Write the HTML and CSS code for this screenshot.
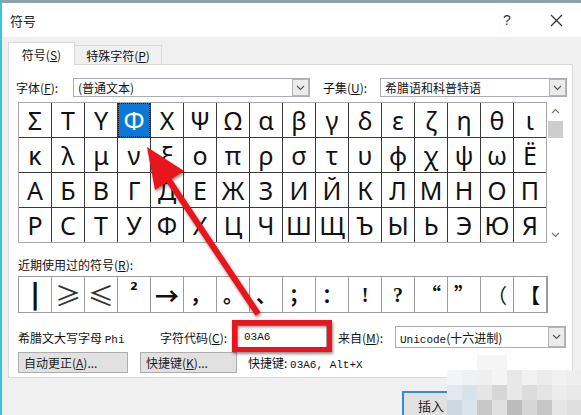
FILE: index.html
```html
<!DOCTYPE html>
<html>
<head>
<meta charset="utf-8">
<title>符号</title>
<link rel="stylesheet" href="styles.css">
</head>
<body>
<div class="window">
  <div class="titlebar">
    <span class="title">符号</span>
    <span class="help">?</span>
    <span class="close"><svg width="13" height="13" viewBox="0 0 13 13"><path d="M1 1L12 12M12 1L1 12" stroke="#333" stroke-width="1.2" fill="none"/></svg></span>
  </div>
  <div class="content">
    <div class="tabs">
      <div class="tab active">符号(<u>S</u>)</div>
      <div class="tab">特殊字符(<u>P</u>)</div>
    </div>
    <div class="panel">
      <div class="row fontrow">
        <span class="lbl w57">字体(<u>F</u>):</span>
        <div class="combo font-combo"><span>(普通文本)</span><span class="arrow"><svg width="9" height="6" viewBox="0 0 9 6"><path d="M1 1L4.5 4.5L8 1" stroke="#555" stroke-width="1.1" fill="none"/></svg></span></div>
        <span class="lbl w57 subset-lbl">子集(<u>U</u>):</span>
        <div class="combo subset-combo"><span>希腊语和科普特语</span><span class="arrow"><svg width="9" height="6" viewBox="0 0 9 6"><path d="M1 1L4.5 4.5L8 1" stroke="#555" stroke-width="1.1" fill="none"/></svg></span></div>
      </div>
      <div class="gridwrap">
        <div class="grid">
          <div class="c">Σ</div><div class="c">Τ</div><div class="c">Υ</div><div class="c sel">Φ</div><div class="c">Χ</div><div class="c">Ψ</div><div class="c">Ω</div><div class="c">α</div><div class="c">β</div><div class="c">γ</div><div class="c">δ</div><div class="c">ε</div><div class="c">ζ</div><div class="c">η</div><div class="c">θ</div><div class="c">ι</div>
          <div class="c">κ</div><div class="c">λ</div><div class="c">μ</div><div class="c">ν</div><div class="c">ξ</div><div class="c">ο</div><div class="c">π</div><div class="c">ρ</div><div class="c">σ</div><div class="c">τ</div><div class="c">υ</div><div class="c">φ</div><div class="c">χ</div><div class="c">ψ</div><div class="c">ω</div><div class="c">Ё</div>
          <div class="c">А</div><div class="c">Б</div><div class="c">В</div><div class="c">Г</div><div class="c">Д</div><div class="c">Е</div><div class="c">Ж</div><div class="c">З</div><div class="c">И</div><div class="c">Й</div><div class="c">К</div><div class="c">Л</div><div class="c">М</div><div class="c">Н</div><div class="c">О</div><div class="c">П</div>
          <div class="c">Р</div><div class="c">С</div><div class="c">Т</div><div class="c">У</div><div class="c">Ф</div><div class="c">Х</div><div class="c">Ц</div><div class="c">Ч</div><div class="c">Ш</div><div class="c">Щ</div><div class="c">Ъ</div><div class="c">Ы</div><div class="c">Ь</div><div class="c">Э</div><div class="c">Ю</div><div class="c">Я</div>
        </div>
        <div class="scrollbar">
          <span class="sb-arrow"><svg width="9" height="6" viewBox="0 0 9 6"><path d="M1 5L4.5 1.5L8 5" stroke="#777" stroke-width="1.2" fill="none"/></svg></span>
          <span class="thumb"></span>
          <span class="sb-space"></span>
          <span class="sb-arrow"><svg width="9" height="6" viewBox="0 0 9 6"><path d="M1 1L4.5 4.5L8 1" stroke="#777" stroke-width="1.2" fill="none"/></svg></span>
        </div>
      </div>
      <div class="recent-label">近期使用过的符号(<u>R</u>):</div>
      <div class="recent">
        <div class="r bar">|</div><div class="r thin">≥</div><div class="r thin">≤</div><div class="r sup">²</div><div class="r arr">→</div><div class="r">，</div><div class="r">。</div><div class="r">、</div><div class="r">；</div><div class="r">：</div><div class="r serif">!</div><div class="r serif">?</div><div class="r">“</div><div class="r">”</div><div class="r paren">（</div><div class="r">【</div>
      </div>
      <div class="row coderow">
        <span class="charname">希腊文大写字母 <span class="mono">Phi</span></span>
        <span class="lbl code-lbl">字符代码(<u>C</u>):</span>
        <div class="input"><span class="mono">03A6</span></div>
        <span class="lbl from-lbl">来自(<u>M</u>):</span>
        <div class="combo from-combo"><span><span class="mono">Unicode</span>(十六进制)</span><span class="arrow"><svg width="9" height="6" viewBox="0 0 9 6"><path d="M1 1L4.5 4.5L8 1" stroke="#555" stroke-width="1.1" fill="none"/></svg></span></div>
      </div>
      <div class="row btnrow">
        <button class="btn btn-auto">自动更正(<u>A</u>)...</button>
        <button class="btn btn-key">快捷键(<u>K</u>)...</button>
        <span class="shortcut">快捷键: <span class="mono">03A6, Alt+X</span></span>
      </div>
    </div>
    <div class="footer">
      <button class="insert">插入</button>
    </div>
  </div>
</div>

<svg class="annot" width="581" height="415" viewBox="0 0 581 415">
  <g class="shadow">
    <line x1="258" y1="314" x2="166" y2="176" stroke="#e8161c" stroke-width="6"/>
    <polygon points="147,147 184,171 155,190" fill="#e8161c"/>
    <rect x="234.5" y="322.5" width="95" height="27" fill="none" stroke="#e8161c" stroke-width="5"/>
  </g>
</svg>

<div class="mosaic">
  <i></i><i></i><i></i><i></i><i></i><i></i><i></i><i></i><i></i>
  <i></i><i></i><i></i><i></i><i></i><i></i><i></i><i></i><i></i>
  <i></i><i></i><i></i><i></i><i></i><i></i><i></i><i></i><i></i>
  <i></i><i></i><i></i><i></i><i></i><i></i><i></i><i></i><i></i>
</div>
</body>
</html>
```

FILE: styles.css
```css
* { box-sizing: border-box; margin: 0; padding: 0; }
html, body { width: 581px; height: 415px; overflow: hidden; }
body {
  position: relative;
  background: #f0f0f0;
  font-family: "Noto Sans CJK SC", sans-serif;
  font-size: 12px;
  color: #111;
}
u { text-decoration: underline; text-underline-offset: 1px; }
.mono { font-family: "Liberation Mono", "Noto Sans CJK SC", monospace; font-size: 11px; }

.window {
  width: 581px;
  height: 415px;
  border-top: 3px solid #8ea3a7;
  border-left: 2px solid #3ec3d2;
  background: #f0f0f0;
}

.titlebar {
  height: 34px;
  background: #fff;
  display: flex;
  align-items: center;
}
.title { padding-left: 8px; font-size: 13px; color: #222; }
.help { margin-left: auto; width: 20px; text-align: center; font-size: 14px; color: #333; margin-right: 19px; font-family: "Liberation Sans", sans-serif; }
.close { width: 40px; display: flex; justify-content: center; margin-right: 5px; }

.content { padding: 5px 8px 0 6px; }

.tabs { display: flex; align-items: flex-end; height: 22px; }
.tab {
  height: 19px;
  width: 88px;
  border: 1px solid #d9d9d9;
  border-bottom: none;
  background: #f0f0f0;
  display: flex;
  align-items: center;
  justify-content: center;
  font-size: 12px;
  margin-left: -1px;
}
.tab.active {
  width: 67px;
  height: 23px;
  margin-left: 0;
  margin-bottom: -1px;
  background: #fff;
  position: relative;
  z-index: 1;
}

.panel {
  height: 314px;
  border: 1px solid #d9d9d9;
  background: #fff;
  padding: 13px 0 0 7px;
}

.row { display: flex; align-items: center; }
.lbl { white-space: nowrap; }
.w57 { width: 57px; }
.subset-lbl { margin-left: 13px; }

.combo {
  height: 19px;
  border: 1px solid #abadb3;
  background: #fff;
  display: flex;
  align-items: center;
  justify-content: space-between;
  padding-left: 4px;
  white-space: nowrap;
}
.font-combo { width: 237px; }
.subset-combo { width: 187px; }
.arrow {
  width: 17px;
  height: 17px;
  border: 1px solid #b5b5b5;
  background: #ececec;
  display: flex;
  align-items: center;
  justify-content: center;
}

.gridwrap { display: flex; margin: 5px 0 0 2px; }
.grid {
  width: 529px;
  height: 141px;
  display: grid;
  grid-template-columns: repeat(16, 32px);
  grid-template-rows: repeat(4, 34px);
  gap: 1px;
  background: #3a3a3a;
  border: 1px solid #a8a8a8;
}
.c {
  background: #fff;
  display: flex;
  align-items: center;
  justify-content: center;
  font-family: "Noto Sans", sans-serif;
  font-size: 25px;
  line-height: 1;
  color: #111;
}
.c.sel {
  background: #0a78d6;
  color: #fff;
  outline: 1px dotted #222;
  outline-offset: -1px;
}

.scrollbar {
  width: 17px;
  height: 141px;
  background: #fff;
  display: flex;
  flex-direction: column;
  align-items: center;
}
.sb-arrow { height: 17px; display: flex; align-items: center; justify-content: center; }
.thumb { width: 15px; height: 17px; background: #cdcdcd; margin-top: 2px; }
.sb-space { flex: 1; }

.recent-label { margin: 14px 0 0 2px; height: 16px; line-height: 16px; }
.recent {
  margin: 3px 0 0 2px;
  width: 530px;
  display: grid;
  grid-template-columns: repeat(16, 32px);
  grid-auto-rows: 35px;
  gap: 1px;
  background: #9c9c9c;
  border: 1px solid #9c9c9c;
}
.r {
  background: #fff;
  display: flex;
  align-items: center;
  justify-content: center;
  font-size: 20px;
  font-weight: bold;
  line-height: 1;
  color: #111;
}
.r.bar { font-family: "DejaVu Sans", sans-serif; font-size: 28px; }
.r.thin { font-weight: normal; font-size: 26px; color: #333; }
.r.paren { font-weight: normal; }
.r.arr { font-size: 24px; }
.r.sup { font-size: 18px; align-items: flex-start; padding-top: 4px; font-family: "DejaVu Sans", sans-serif; }
.r.serif { font-family: "Liberation Serif", serif; font-size: 20px; }

.coderow { margin-top: 12px; height: 24px; padding-left: 2px; }
.charname { width: 142px; white-space: nowrap; }
.code-lbl { width: 77px; }
.input {
  width: 90px;
  height: 24px;
  border: 1px solid #abadb3;
  display: flex;
  align-items: center;
  padding-left: 6px;
}
.from-lbl { margin-left: 11px; width: 57px; }
.from-combo { width: 171px; height: 22px; }
.from-combo .arrow { height: 20px; }

.btnrow { margin-top: 3px; padding-left: 2px; }
.btn {
  height: 21px;
  background: #e1e1e1;
  border: 1px solid #adadad;
  font-family: "Noto Sans CJK SC", sans-serif;
  font-size: 12px;
  color: #222;
  text-align: left;
  padding-left: 5px;
}
.btn-auto { width: 110px; }
.btn-key { width: 97px; margin-left: 12px; }
.shortcut { margin-left: 11px; white-space: nowrap; }

.footer { margin: 13px 0 0 394px; }
.insert {
  width: 58px;
  height: 28px;
  background: #e1e1e1;
  border: 2px solid #3a88d6;
  font-family: "Noto Sans CJK SC", sans-serif;
  font-size: 13px;
  color: #222;
}

.annot { position: absolute; left: 0; top: 0; pointer-events: none; }
.shadow { filter: drop-shadow(1px 2px 1.5px rgba(0,0,0,0.45)); }

.mosaic {
  position: absolute;
  left: 447px;
  top: 355px;
  display: grid;
  grid-template-columns: repeat(9, 15px);
  grid-auto-rows: 15px;
}
.mosaic i { display: block; }
.mosaic i:nth-child(3) { background: rgba(235,235,235,0.5); }
.mosaic i:nth-child(4) { background: rgba(235,235,235,0.5); }
.mosaic i:nth-child(10) { background: #f2f5f7; }
.mosaic i:nth-child(11) { background: #edf1f4; }
.mosaic i:nth-child(12) { background: #efefef; }
.mosaic i:nth-child(13) { background: #f4f4f4; }
.mosaic i:nth-child(14) { background: #e8e8e8; }
.mosaic i:nth-child(15) { background: #f2f2f2; }
.mosaic i:nth-child(16) { background: #ececec; }
.mosaic i:nth-child(17) { background: #f1f1f1; }
.mosaic i:nth-child(18) { background: #eeeeee; }
.mosaic i:nth-child(19) { background: #e1e9ef; }
.mosaic i:nth-child(20) { background: #d8e2ea; }
.mosaic i:nth-child(21) { background: #e5e5e5; }
.mosaic i:nth-child(22) { background: #d6d6d6; }
.mosaic i:nth-child(23) { background: #e8e8e8; }
.mosaic i:nth-child(24) { background: #dcdcdc; }
.mosaic i:nth-child(25) { background: #e4e4e4; }
.mosaic i:nth-child(26) { background: #ececec; }
.mosaic i:nth-child(27) { background: #e9e9e9; }
.mosaic i:nth-child(28) { background: #cbd7e1; }
.mosaic i:nth-child(29) { background: #dce4eb; }
.mosaic i:nth-child(30) { background: #c8c8c8; }
.mosaic i:nth-child(31) { background: #e0e0e0; }
.mosaic i:nth-child(32) { background: #bcbcbc; }
.mosaic i:nth-child(33) { background: #d6d6d6; }
.mosaic i:nth-child(34) { background: #c6c6c6; }
.mosaic i:nth-child(35) { background: #e6e6e6; }
.mosaic i:nth-child(36) { background: #dedede; }
```
